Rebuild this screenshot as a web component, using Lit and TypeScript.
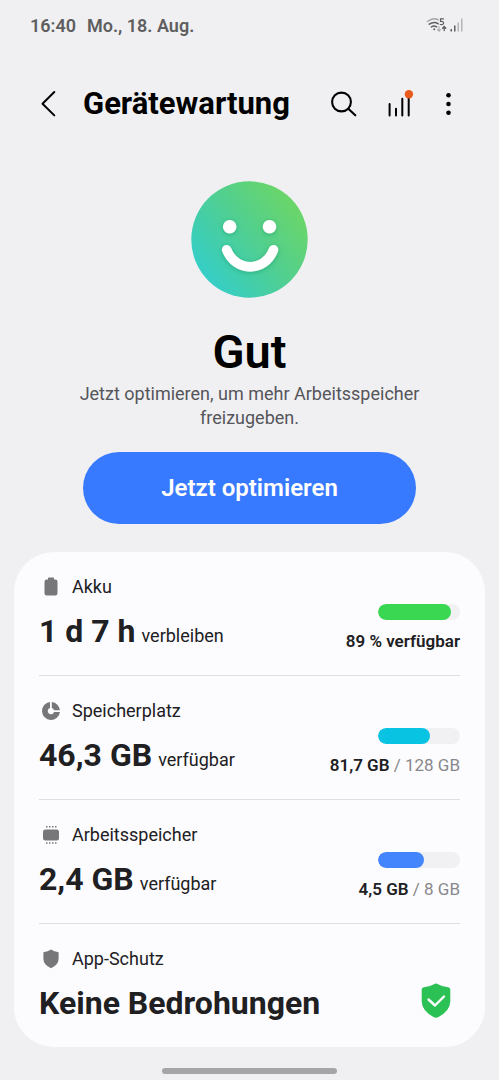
import { LitElement, html, css, svg, nothing } from "lit";
import { customElement, property } from "lit/decorators.js";

const batteryIcon = svg`<path d="M9 3.2q0-.7.7-.7h4.6q.7 0 .7.7v1.3h1.300q2.200 0 2.200 2.200v11.600q0 2.200-2.200 2.200h-8.600q-2.200 0-2.200-2.200v-11.600q0-2.200 2.200-2.200h1.300z"/>`;
const storageIcon = svg`<path d="M11 3.050A9 9 0 1 0 20.950 13L15 13A3.200 3.200 0 1 1 11 9z"/><path d="M12.800 3.050A9 9 0 0 1 20.950 11.200L15 11.200A3.200 3.200 0 0 0 12.800 9z"/>`;
const memoryIcon = svg`<rect x="4" y="6.500" width="16" height="11" rx="2.500"/><path d="M7 3h1.500v1.500h-1.500zM10 3h1.500v1.500h-1.500zM13 3h1.500v1.500h-1.500zM16 3h1.500v1.500h-1.500zM7 19.300h1.500v1.500h-1.500zM10 19.300h1.500v1.500h-1.500zM13 19.300h1.500v1.500h-1.500zM16 19.300h1.500v1.500h-1.500z"/>`;
const shieldIcon = svg`<path d="M12 2.500Q15.500 4.600 18.800 4.900Q19.600 5 19.600 5.800V12.200Q19.400 17.800 12 21.300Q4.600 17.800 4.400 12.200V5.800Q4.400 5 5.200 4.900Q8.500 4.600 12 2.500z"/>`;

@customElement("usage-bar")
class UsageBar extends LitElement {
  @property({ type: Number }) value = 0;
  @property() color = "";
  @property() label = "";

  static styles = css`
    :host { display: block; width: 82px; }
    .track { height: 16px; border-radius: 8px; background: #f1f1f3; overflow: hidden; }
    .fill { height: 100%; border-radius: 8px; }
  `;

  render() {
    return html`<div class="track" role="meter" aria-label=${this.label} aria-valuemin="0" aria-valuemax="100" aria-valuenow=${this.value}>
      <div class="fill" style="width:${this.value}%;background:${this.color}"></div>
    </div>`;
  }
}

interface Row {
  icon: unknown;
  label: string;
  value: string;
  unit?: string;
  percent?: number;
  color?: string;
  strong?: string;
  rest?: string;
}

const rows: Row[] = [
  { icon: batteryIcon, label: "Akku", value: "1 d 7 h", unit: "verbleiben", percent: 89, color: "#3ad753", strong: "89 % verfügbar" },
  { icon: storageIcon, label: "Speicherplatz", value: "46,3 GB", unit: "verfügbar", percent: 64, color: "#09c3e2", strong: "81,7 GB", rest: " / 128 GB" },
  { icon: memoryIcon, label: "Arbeitsspeicher", value: "2,4 GB", unit: "verfügbar", percent: 56, color: "#4285fd", strong: "4,5 GB", rest: " / 8 GB" },
  { icon: shieldIcon, label: "App-Schutz", value: "Keine Bedrohungen" },
];

@customElement("app-root")
class AppRoot extends LitElement {
  static styles = css`
    :host {
      display: flex;
      flex-direction: column;
      min-height: 100vh;
      box-sizing: border-box;
      background: #f0f0f3;
      color: #202023;
      font-family: Roboto, "Noto Sans", sans-serif;
    }
    * { box-sizing: border-box; }
    svg { display: block; }
    button { border: 0; padding: 0; background: none; font: inherit; color: inherit; cursor: pointer; }
    .status { display: flex; justify-content: space-between; align-items: center; height: 50px; padding: 0 35px 0 30px; color: #5e5e60; font-size: 18px; font-weight: 600; }
    .when { display: flex; gap: 11px; }
    .bar { display: flex; align-items: center; height: 52px; margin-top: 28px; padding: 0 31px 0 32px; }
    .back, .tool { display: grid; place-items: center; height: 48px; }
    .back { width: 32px; }
    .tool { width: 56px; }
    .more { width: 40px; }
    .title { flex: 1; margin: 0; padding-left: 19px; color: #000; font-size: 31px; line-height: 40px; font-weight: 700; }
    .hero { display: flex; flex-direction: column; align-items: center; padding-top: 51px; text-align: center; }
    .state { margin: 26px 0 0; color: #000; font-size: 47px; line-height: 56px; font-weight: 600; }
    .hint { max-width: 380px; margin: 2px 0 0; color: #55555a; font-size: 18px; line-height: 24px; }
    .optimize { width: 66.7%; height: 72px; margin-top: 22px; border-radius: 36px; background: #387aff; color: #fff; font-size: 24px; font-weight: 600; }
    .card { margin: 28px 14px 0; padding: 0 25px; border-radius: 40px; background: #fcfcfe; list-style: none; }
    .item { border-bottom: 1px solid #dfdfe2; }
    .item:last-child { border-bottom: 0; }
    .row { display: flex; justify-content: space-between; align-items: flex-end; padding: 23px 0 24px; color: inherit; text-decoration: none; }
    .label { display: flex; align-items: center; gap: 9px; font-size: 18px; line-height: 24px; }
    .glyph { fill: #77777a; }
    .amount { display: flex; align-items: baseline; gap: 6px; margin-top: 12px; white-space: nowrap; }
    .value { font-size: 32px; line-height: 40px; font-weight: 700; }
    .unit { font-size: 18px; line-height: 24px; }
    .usage { display: flex; flex-direction: column; align-items: flex-end; gap: 11px; font-size: 17px; line-height: 20px; }
    .strong { font-weight: 600; }
    .rest { color: #88888c; white-space: pre; }
    .safe { margin-right: 8px; }
    .nav { width: 35%; height: 6px; margin: 21px auto 7px; border-radius: 3px; background: #a5a5a7; }
  `;

  renderRow(r: Row) {
    return html`<li class="item">
      <a class="row" href="#">
        <div>
          <div class="label"><svg class="glyph" width="24" height="24" viewBox="0 0 24 24" aria-hidden="true">${r.icon}</svg>${r.label}</div>
          <div class="amount"><span class="value">${r.value}</span>${r.unit ? html`<span class="unit">${r.unit}</span>` : nothing}</div>
        </div>
        ${r.percent
          ? html`<div class="usage">
              <usage-bar .value=${r.percent} .color=${r.color ?? ""} .label=${r.label}></usage-bar>
              <div><span class="strong">${r.strong}</span>${r.rest ? html`<span class="rest">${r.rest}</span>` : nothing}</div>
            </div>`
          : html`<svg class="safe" width="32" height="44" viewBox="0 0 32 44" role="img" aria-label="Geschützt">
              <path d="M16 4.500Q17 4.500 18 5.200Q22.500 7.800 28.200 8.300Q30.300 8.600 30.300 10.500V22Q30.300 31.500 18.500 38Q16 39.300 13.500 38Q1.700 31.500 1.700 22V10.500Q1.700 8.600 3.800 8.300Q9.500 7.800 14 5.200Q15 4.500 16 4.500z" fill="#2bc154"/>
              <path d="M8.500 20.500L15 26.500L24 17.500" fill="none" stroke="#fff" stroke-width="2.400" stroke-linecap="round" stroke-linejoin="round"/>
            </svg>`}
      </a>
    </li>`;
  }

  render() {
    return html`
      <div class="status">
        <div class="when"><span>16:40</span><span>Mo., 18. Aug.</span></div>
        <svg width="38" height="16" viewBox="0 0 38 16" aria-hidden="true">
          <g fill="none" stroke-linecap="round" stroke-width="1.500">
            <path d="M1.500 4.500Q7 .3 12 2.700" stroke="#a5a5a8"/>
            <path d="M3.300 7.200Q8 3.900 12.300 6.800" stroke="#5e5e60"/>
            <path d="M5.400 9.900Q8 8.200 10.600 9.900" stroke="#5e5e60"/>
            <path d="M17.500 1.800H14.500V4.500Q17.700 4 17.600 6.200Q17.300 8.100 14.200 7.500" stroke="#5e5e60" stroke-width="1.200"/>
            <path d="M13 9.500V14M11.500 12.600L13 14.200L14.500 12.600" stroke="#aaaaad" stroke-width="1.100"/>
            <path d="M18.200 13.500V10M16.600 11.200L18.200 9.500L19.800 11.200" stroke="#5e5e60" stroke-width="1.300"/>
          </g>
          <circle cx="8.200" cy="12.300" r="1" fill="#5e5e60"/>
          <path d="M24.500 12h1.500v2.500h-1.500zM28 8.500h1.500v6h-1.500z" fill="#5e5e60"/>
          <path d="M31.500 5.500h1.500v9h-1.500zM35 1.500h1.500v13h-1.500z" fill="#b4b4b7"/>
        </svg>
      </div>
      <header class="bar">
        <button class="back" aria-label="Zurück">
          <svg width="32" height="32" viewBox="0 0 32 32" fill="none" stroke="#000" stroke-width="2" stroke-linecap="round" stroke-linejoin="round"><path d="M22.300 4L10.500 15.700L22.300 27.400"/></svg>
        </button>
        <h1 class="title">Gerätewartung</h1>
        <button class="tool" aria-label="Suchen">
          <svg width="32" height="32" viewBox="0 0 32 32" fill="none" stroke="#000" stroke-width="2.100" stroke-linecap="round"><circle cx="13.500" cy="14" r="9.400"/><path d="M20.300 20.800L27.300 27.300"/></svg>
        </button>
        <button class="tool" aria-label="Statistik">
          <svg width="32" height="32" viewBox="0 0 32 32" fill="none" stroke="#000" stroke-width="2" stroke-linecap="round"><path d="M5.600 16V27.500M12 20.800V27.500M18.300 10.800V27.500M24.700 9V27.500"/><circle cx="24.900" cy="6.200" r="4.200" fill="#e95b1c" stroke="none"/></svg>
        </button>
        <button class="tool more" aria-label="Weitere Optionen">
          <svg width="32" height="32" viewBox="0 0 32 32"><circle cx="16.500" cy="7.300" r="2.300"/><circle cx="16.500" cy="16" r="2.300"/><circle cx="16.500" cy="24.700" r="2.300"/></svg>
        </button>
      </header>
      <main>
        <section class="hero">
          <svg width="117" height="117" viewBox="0 0 117 117" role="img" aria-label="Zustand gut">
            <defs>
              <linearGradient id="face" x1="0.120" y1="0.800" x2="0.880" y2="0.200">
                <stop offset="0" stop-color="#36cec5"/><stop offset="0.500" stop-color="#4fcf93"/><stop offset="1" stop-color="#6ad56a"/>
              </linearGradient>
              <filter id="shade" x="-20%" y="-20%" width="140%" height="150%"><feDropShadow dx="0" dy="1" stdDeviation="2.500" flood-color="#16855c" flood-opacity="0.450"/></filter>
            </defs>
            <circle cx="58.500" cy="58.500" r="58.200" fill="url(#face)"/>
            <g filter="url(#shade)">
              <circle cx="38.700" cy="45.800" r="6.800" fill="#fff"/>
              <circle cx="78.500" cy="45.800" r="6.800" fill="#fff"/>
              <path d="M35.700 68.800C44.500 91.500 74 91.500 82.500 68.800" fill="none" stroke="#fff" stroke-width="9.600" stroke-linecap="round"/>
            </g>
          </svg>
          <h2 class="state">Gut</h2>
          <p class="hint">Jetzt optimieren, um mehr Arbeitsspeicher freizugeben.</p>
          <button class="optimize">Jetzt optimieren</button>
        </section>
        <ul class="card">${rows.map((r) => this.renderRow(r))}</ul>
      </main>
      <div class="nav"></div>
    `;
  }
}
